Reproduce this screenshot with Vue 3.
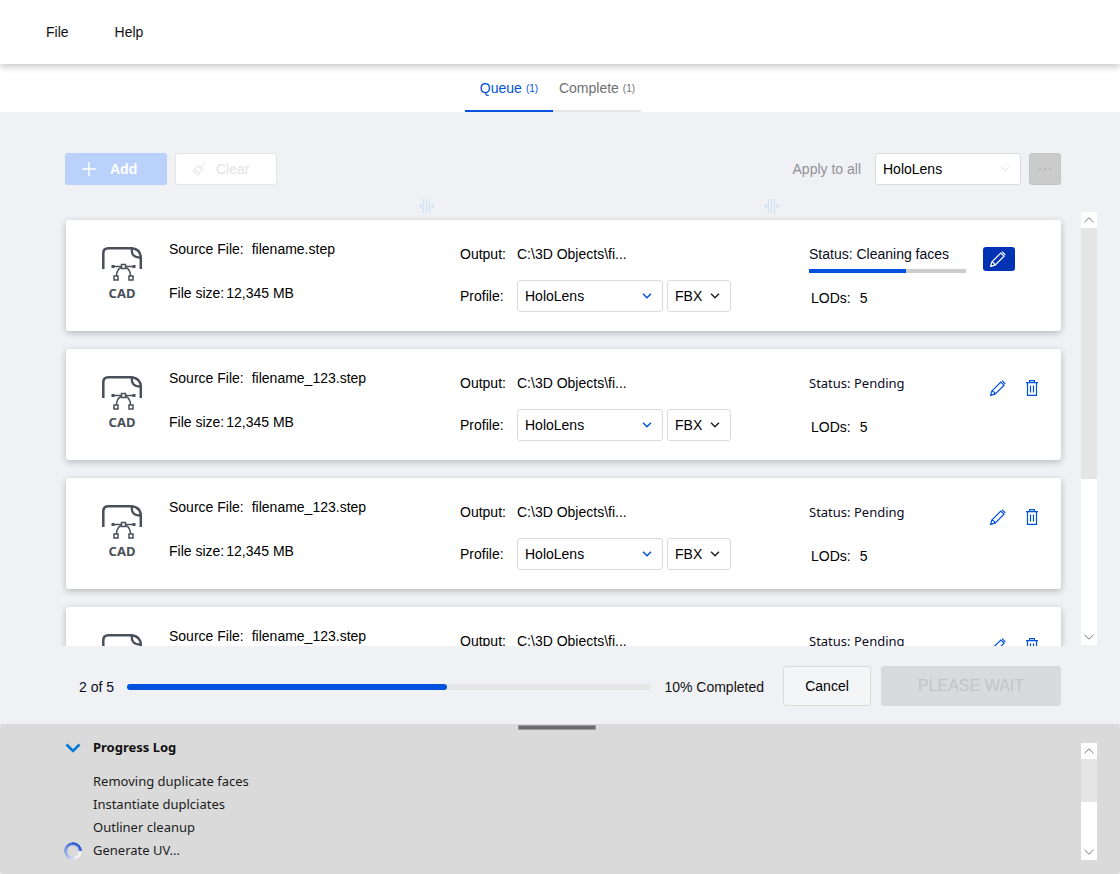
<script setup>
import { ref } from 'vue'

const tabs = [
  { name: 'Queue', count: 1 },
  { name: 'Complete', count: 1 },
]
const activeTab = ref('Queue')

const profiles = ['HoloLens', 'Desktop', 'Mobile']
const formats = ['FBX', 'GLB', 'OBJ']

const files = ref([
  { id: 1, name: 'filename.step', status: 'Cleaning faces', progress: 62, profile: 'HoloLens', format: 'FBX' },
  { id: 2, name: 'filename_123.step', status: 'Pending', progress: 0, profile: 'HoloLens', format: 'FBX' },
  { id: 3, name: 'filename_123.step', status: 'Pending', progress: 0, profile: 'HoloLens', format: 'FBX' },
  { id: 4, name: 'filename_123.step', status: 'Pending', progress: 0, profile: 'HoloLens', format: 'FBX' },
])
const applyProfile = ref('HoloLens')
const overall = 61

const log = ['Removing duplicate faces', 'Instantiate duplciates', 'Outliner cleanup', 'Generate UV...']
</script>

<template>
  <div class="app">
    <header class="menubar">
      <button type="button" class="menu">File</button>
      <button type="button" class="menu">Help</button>
    </header>

    <nav class="tabs">
      <button
        v-for="tab in tabs"
        :key="tab.name"
        type="button"
        class="tab"
        :class="{ active: tab.name === activeTab }"
        @click="activeTab = tab.name"
      >
        {{ tab.name }} <small>({{ tab.count }})</small>
      </button>
    </nav>

    <main class="main">
      <div class="toolbar">
        <button type="button" class="btn add" disabled>
          <svg width="14" height="14" viewBox="0 0 14 14"><path d="M7 0V14M0 7H14" stroke="#fff" stroke-width="1.4" /></svg>
          Add
        </button>
        <button type="button" class="btn clear" disabled>
          <svg width="14" height="14" viewBox="0 0 14 14" fill="none" stroke="#e2e4e4" stroke-width="1">
            <path d="M13.500.6L9 5M5.800 4.200L9.800 8.200M5.800 4.200Q8 3.400 9 5Q10.600 6 9.800 8.200L8.800 10.200L5.600 13.200L.8 8.400L4 6.400ZM3.400 6.900L7.800 11M2.800 10.200L4.400 9M4.400 12L5.800 10.600" />
          </svg>
          Clear
        </button>
        <label class="apply" for="apply-profile">Apply to all</label>
        <span class="select wide">
          <select id="apply-profile" v-model="applyProfile">
            <option v-for="p in profiles" :key="p">{{ p }}</option>
          </select>
          <svg class="chev faded" width="10" height="6" viewBox="0 0 10 6"><path d="M1 .8L5 4.800L9 .8" /></svg>
        </span>
        <button type="button" class="more" aria-label="More options" disabled>
          <svg width="14" height="4" viewBox="0 0 14 4" fill="#b9b9b9"><path d="M1 1h2v2H1zM6 1h2v2H6zM11 1h2v2h-2z" /></svg>
        </button>
      </div>

      <div class="handles">
        <svg v-for="n in 2" :key="n" width="16" height="16" viewBox="0 0 16 16">
          <path d="M4.500 1V15M7.500 1V15M10.500 1V15" stroke="#cfe3f3" stroke-width="1.200" />
          <path d="M3 5.500V10.500L0 8ZM12.500 5.500V10.500L15.500 8Z" fill="#cfe3f3" />
        </svg>
      </div>

      <div class="queue">
        <div class="list">
          <article v-for="file in files" :key="file.id" class="card">
            <div class="source">
              <div class="cad">
                <svg width="42" height="36" viewBox="0 0 42 36" fill="none" stroke="#495059">
                  <path d="M2.300 23V7.500Q2.300 2.300 7.500 2.300H31Q39.800 3.500 39.800 12V23" stroke-width="2.500" />
                  <path d="M31 2.300Q29.500 11.500 39.800 11.500" stroke-width="2.300" />
                  <path d="M12 20.500H20M25 20.500H33" stroke-width="1.500" />
                  <path d="M20 21.500Q15.500 24 15.500 30M25 21.500Q29.500 24 29.500 30" stroke-width="1.500" />
                  <path d="M20.500 18.500h4v4h-4zM13 30h4v4h-4zM28 30h4v4h-4z" stroke-width="1.500" />
                  <path d="M10.500 19h3v3h-3zM31.500 19h3v3h-3z" fill="#495059" stroke="none" />
                </svg>
                <span>CAD</span>
              </div>
              <dl class="facts">
                <div class="name"><dt>Source File:</dt><dd>{{ file.name }}</dd></div>
                <div class="size"><dt>File size:</dt><dd>12,345 MB</dd></div>
              </dl>
            </div>

            <div class="output">
              <span>Output:</span>
              <span>C:\3D Objects\fi...</span>
              <label :for="'profile-' + file.id">Profile:</label>
              <span class="pickers">
                <span class="select wide">
                  <select :id="'profile-' + file.id" v-model="file.profile">
                    <option v-for="p in profiles" :key="p">{{ p }}</option>
                  </select>
                  <svg class="chev blue" width="10" height="6" viewBox="0 0 10 6"><path d="M1 .8L5 4.800L9 .8" /></svg>
                </span>
                <span class="select narrow">
                  <select v-model="file.format" aria-label="Format">
                    <option v-for="f in formats" :key="f">{{ f }}</option>
                  </select>
                  <svg class="chev" width="10" height="6" viewBox="0 0 10 6"><path d="M1 .8L5 4.800L9 .8" /></svg>
                </span>
              </span>
            </div>

            <div class="state">
              <p class="status" :class="{ pending: !file.progress }">Status: {{ file.status }}</p>
              <div class="track" :class="{ idle: !file.progress }">
                <div class="fill" :style="{ width: file.progress + '%' }"></div>
              </div>
              <p class="lods"><span>LODs:</span><span>5</span></p>
            </div>

            <div class="actions">
              <button type="button" class="edit" :class="{ on: file.progress }" aria-label="Edit">
                <svg width="16" height="16" viewBox="0 0 16 16" fill="none" stroke="currentColor" stroke-width="1.200">
                  <path d="M.6 15.400L1.800 11L10.800 2L14 5.200L5 14.200ZM1.800 11Q4.500 11.500 5 14.200M12 .7L15.300 4" />
                </svg>
              </button>
              <button v-if="!file.progress" type="button" class="trash" aria-label="Delete">
                <svg width="12" height="16" viewBox="0 0 12 16" fill="none" stroke="currentColor" stroke-width="1.200">
                  <path d="M0 2.600H12M3.600 2.600V.7H8.400V2.600M1.500 2.600V15.300H10.500V2.600M4.500 5.500V12.500M7.500 5.500V12.500" />
                </svg>
              </button>
            </div>
          </article>
        </div>
        <div class="scroll">
          <button type="button" aria-label="Scroll queue up"><svg width="10" height="6" viewBox="0 0 10 6"><path d="M.5 5.200L5 .8L9.500 5.200" /></svg></button>
          <div class="lane"><div class="thumb queue-thumb"></div></div>
          <button type="button" aria-label="Scroll queue down"><svg width="10" height="6" viewBox="0 0 10 6"><path d="M.5 .8L5 5.200L9.500 .8" /></svg></button>
        </div>
      </div>

      <footer class="footer">
        <span class="count">2 of 5</span>
        <div class="bar"><div class="bar-fill" :style="{ width: overall + '%' }"></div></div>
        <span class="percent">10% Completed</span>
        <button type="button" class="cancel">Cancel</button>
        <button type="button" class="wait" disabled>PLEASE WAIT</button>
      </footer>
    </main>

    <section class="log">
      <div class="grip"></div>
      <div class="log-body">
        <h2>
          <button type="button" class="toggle">
            <svg width="16" height="10" viewBox="0 0 16 10"><path d="M1.500 1.500L8 8L14.500 1.500" fill="none" stroke="#0078db" stroke-width="2.600" /></svg>
            Progress Log
          </button>
        </h2>
        <ul>
          <li v-for="(line, i) in log" :key="line">
            <span v-if="i === log.length - 1" class="spinner"></span>{{ line }}
          </li>
        </ul>
      </div>
      <div class="scroll">
        <button type="button" aria-label="Scroll log up"><svg width="10" height="6" viewBox="0 0 10 6"><path d="M.5 5.200L5 .8L9.500 5.200" /></svg></button>
        <div class="lane"><div class="thumb log-thumb"></div></div>
        <button type="button" aria-label="Scroll log down"><svg width="10" height="6" viewBox="0 0 10 6"><path d="M.5 .8L5 5.200L9.500 .8" /></svg></button>
      </div>
    </section>
  </div>
</template>

<style>
body {
  margin: 0;
}
</style>

<style scoped>
* {
  box-sizing: border-box;
}
.app {
  display: flex;
  flex-direction: column;
  height: 100vh;
  background: #f0f1f5;
  color: #111;
  font: 14px/20px "Liberation Sans", Arial, sans-serif;
}
button,
select {
  font: inherit;
  color: inherit;
  margin: 0;
}
button {
  display: flex;
  align-items: center;
  justify-content: center;
  padding: 0;
  border: 0;
  background: none;
}
p,
h2,
ul,
dl,
dd {
  margin: 0;
  padding: 0;
}
.menubar {
  position: relative;
  display: flex;
  flex: none;
  gap: 46px;
  height: 64px;
  padding: 0 46px;
  background: #fff;
  box-shadow: 0 2px 8px rgba(0, 0, 0, 0.26);
}
.tabs {
  display: flex;
  flex: none;
  justify-content: center;
  height: 48px;
  padding-right: 14px;
  background: #fff;
}
.tab {
  width: 88px;
  gap: 4px;
  padding-top: 2px;
  border-bottom: 2px solid #e5e5e5;
  color: #707070;
  white-space: nowrap;
}
.tab small {
  padding-top: 2px;
  font-size: 10px;
}
.tab.active {
  border-color: #0052dc;
  color: #0052dc;
}
.main {
  display: flex;
  flex: 1;
  flex-direction: column;
  min-height: 0;
}
.toolbar {
  display: flex;
  flex: none;
  align-items: center;
  gap: 8px;
  padding: 41px 59px 0 65px;
}
.btn {
  justify-content: flex-start;
  width: 102px;
  height: 32px;
  padding-left: 17px;
  gap: 14px;
  border-radius: 3px;
}
.add {
  background: #bad1fb;
  color: #fff;
  font-weight: 700;
}
.clear {
  padding-left: 16px;
  gap: 10px;
  border: 1px solid #e5e5e5;
  background: #fff;
  color: #e2e4e4;
}
.apply {
  margin-left: auto;
  padding-right: 6px;
  color: #919295;
}
.more {
  width: 32px;
  height: 32px;
  border: 1px solid #c3c3c3;
  border-radius: 3px;
  background: #cbcbcb;
}
.select {
  position: relative;
  display: inline-flex;
  height: 32px;
}
.wide {
  width: 146px;
}
.narrow {
  width: 64px;
}
.select select {
  width: 100%;
  padding: 0 7px;
  border: 1px solid #dadcdc;
  border-radius: 3px;
  background: #fff;
  color: #000;
  appearance: none;
}
.chev {
  position: absolute;
  top: 13px;
  right: 11px;
  fill: none;
  stroke: #222;
  stroke-width: 1.5;
  pointer-events: none;
}
.chev.blue {
  stroke: #0052dc;
}
.chev.faded {
  stroke: #dcdcdc;
  stroke-width: 1;
}
.handles {
  display: grid;
  flex: none;
  grid-template-columns: 345fr 345fr;
  height: 27px;
  padding: 13px 11px 0 419px;
}
.queue {
  display: flex;
  flex: 1;
  min-height: 0;
  padding-right: 23px;
}
.list {
  display: flex;
  flex: 1;
  flex-direction: column;
  gap: 18px;
  padding: 8px 20px 0 66px;
  overflow: hidden;
}
.card {
  display: grid;
  flex: none;
  grid-template-columns: 394fr 349fr 174fr 78fr;
  height: 111px;
  border-radius: 3px;
  background: #fff;
  box-shadow: 0 2px 7px rgba(0, 0, 0, 0.24);
  color: #000;
}
.source {
  display: flex;
  gap: 26px;
  padding: 19px 0 0 35px;
}
.cad {
  display: flex;
  flex-direction: column;
  align-items: center;
  width: 42px;
  padding-top: 7px;
  color: #495059;
  font: 700 13px/22px "Noto Sans", sans-serif;
}
.facts {
  display: flex;
  flex-direction: column;
  gap: 24px;
}
.facts div {
  display: flex;
}
.name {
  gap: 8px;
}
.size {
  gap: 2px;
}
.output {
  display: grid;
  grid-template-columns: 57px 1fr;
  grid-template-rows: 20px 32px;
  row-gap: 16px;
  align-items: center;
  padding-top: 24px;
}
.pickers {
  display: flex;
  gap: 4px;
}
.state {
  padding: 24px 17px 0 0;
}
.status {
  color: #0b0b24;
}
.pending {
  font: 13px/20px "Noto Sans", sans-serif;
}
.track {
  height: 4px;
  margin: 5px 0 15px;
  background: #ccc;
}
.track.idle {
  background: none;
}
.fill {
  height: 100%;
  background: #0052dc;
}
.lods {
  display: flex;
  gap: 9px;
  padding-left: 2px;
}
.actions {
  display: flex;
  align-items: center;
  gap: 11px;
  height: 24px;
  margin-top: 27px;
  color: #0052dc;
}
.edit {
  width: 32px;
  height: 24px;
  padding-right: 2px;
  border-radius: 3px;
}
.edit.on {
  background: #0032b4;
  color: #fff;
}
.scroll {
  display: flex;
  flex: none;
  flex-direction: column;
  width: 16px;
  margin-bottom: 1px;
  background: #fff;
}
.scroll button {
  flex: none;
  height: 16px;
}
.scroll path {
  fill: none;
  stroke: #777;
}
.lane {
  flex: 1;
}
.thumb {
  background: #e5e5e5;
}
.queue-thumb {
  height: 62.5%;
}
.log-thumb {
  height: 50%;
}
.footer {
  display: flex;
  flex: none;
  align-items: center;
  height: 78px;
  padding: 2px 59px 0 79px;
}
.count,
.percent {
  padding-top: 2px;
}
.count {
  color: #0b0b24;
}
.bar {
  flex: 1;
  height: 6px;
  margin: 2px 13px 0;
  border-radius: 3px;
  background: #e6e6e6;
}
.bar-fill {
  height: 100%;
  border-radius: 3px;
  background: #0052dc;
}
.cancel {
  width: 88px;
  height: 40px;
  margin: 0 10px 0 19px;
  border: 1px solid #dadcdc;
  border-radius: 3px;
  background: #f4f5f7;
  color: #000;
}
.wait {
  width: 180px;
  height: 40px;
  border-radius: 3px;
  background: #d9dadd;
  color: #c3c4c7;
  font-size: 16px;
}
.log {
  position: relative;
  display: flex;
  flex: none;
  justify-content: space-between;
  height: 150px;
  padding: 0 23px 14px 65px;
  border-radius: 3px;
  background: #dadada;
  color: #1c1c1c;
  font: 13px/23px "Noto Sans", sans-serif;
}
.log .scroll {
  margin: 19px 0 0;
}
.grip {
  position: absolute;
  top: 1px;
  left: calc(50% - 42px);
  width: 78px;
  height: 5px;
  border: 1px solid #999;
  background: #6c6c6c;
}
.log-body {
  padding-top: 12px;
}
.log h2 {
  font-size: 13px;
  line-height: 23px;
}
.toggle {
  gap: 12px;
  color: #111;
}
.log ul {
  padding: 11px 0 0 28px;
  list-style: none;
}
.log li {
  position: relative;
}
.spinner {
  position: absolute;
  top: 3px;
  left: -29px;
  width: 18px;
  height: 18px;
  border-radius: 50%;
  background: conic-gradient(#2b5bd7 0 85deg, #f4f5fa 95deg 150deg, #b4c4ee 210deg, #6f90e2 290deg, #2b5bd7 360deg);
  mask: radial-gradient(circle, transparent 5px, #000 7px);
}
</style>
